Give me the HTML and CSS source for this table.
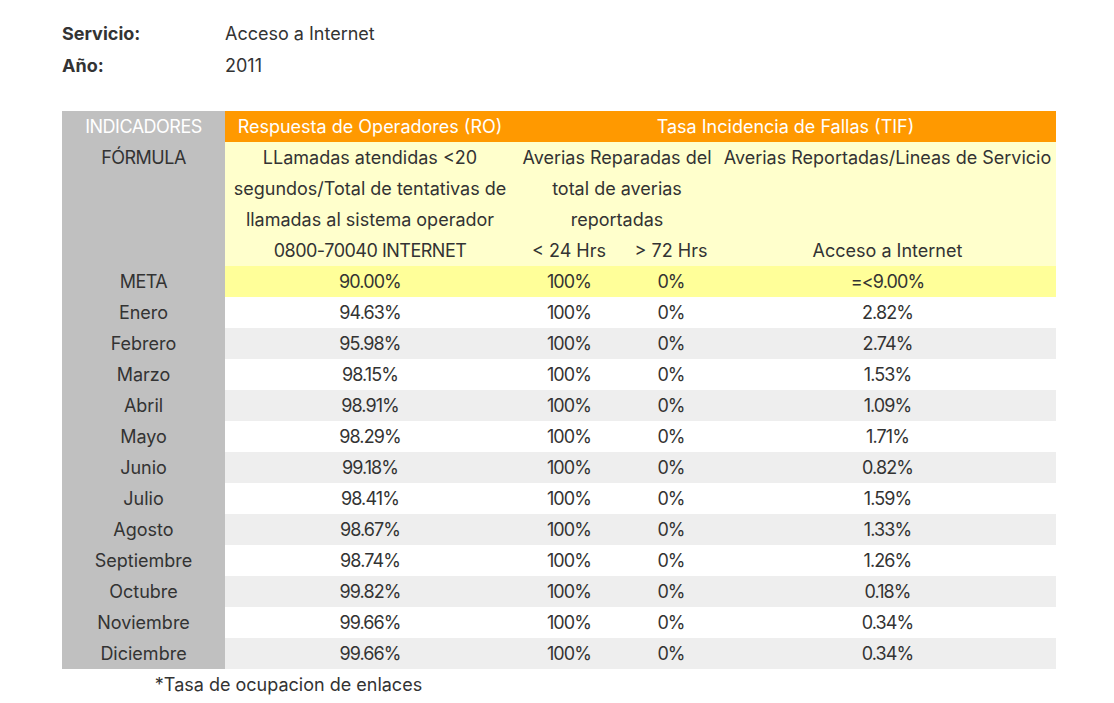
FILE: index.html
```html
<!DOCTYPE html>
<html lang="es">
<head>
<meta charset="utf-8">
<title>Indicadores - Acceso a Internet 2011</title>
<link rel="stylesheet" href="styles.css">
</head>
<body>
<div class="page">
  <table class="info">
    <tr><th class="info-label">Servicio:</th><td class="info-value">Acceso a Internet</td></tr>
    <tr><th class="info-label">Año:</th><td class="info-value">2011</td></tr>
  </table>

  <table class="ind">
    <colgroup>
      <col class="c-ind"><col class="c-ro"><col class="c-24"><col class="c-72"><col class="c-acc">
    </colgroup>
    <tr class="hdr">
      <td class="first first-hdr caps">INDICADORES</td>
      <td>Respuesta de Operadores (RO)</td>
      <td colspan="3">Tasa Incidencia de Fallas (TIF)</td>
    </tr>
    <tr class="formula">
      <td class="first top caps" rowspan="2">FÓRMULA</td>
      <td rowspan="2">LLamadas atendidas &lt;20 segundos/Total de tentativas de llamadas al sistema operador <span class="caps">0800-70040 INTERNET</span></td>
      <td colspan="2" class="top">Averias Reparadas del total de averias reportadas</td>
      <td class="top nowrap">Averias Reportadas/Lineas de Servicio</td>
    </tr>
    <tr class="formula">
      <td>&lt; 24 Hrs</td>
      <td>&gt; 72 Hrs</td>
      <td>Acceso a Internet</td>
    </tr>
    <tr class="meta data">
      <td class="first caps">META</td><td>90.00%</td><td>100%</td><td>0%</td><td>=&lt;9.00%</td>
    </tr>
    <tr class="odd data"><td class="first">Enero</td><td>94.63%</td><td>100%</td><td>0%</td><td>2.82%</td></tr>
    <tr class="even data"><td class="first">Febrero</td><td>95.98%</td><td>100%</td><td>0%</td><td>2.74%</td></tr>
    <tr class="odd data"><td class="first">Marzo</td><td>98.15%</td><td>100%</td><td>0%</td><td>1.53%</td></tr>
    <tr class="even data"><td class="first">Abril</td><td>98.91%</td><td>100%</td><td>0%</td><td>1.09%</td></tr>
    <tr class="odd data"><td class="first">Mayo</td><td>98.29%</td><td>100%</td><td>0%</td><td>1.71%</td></tr>
    <tr class="even data"><td class="first">Junio</td><td>99.18%</td><td>100%</td><td>0%</td><td>0.82%</td></tr>
    <tr class="odd data"><td class="first">Julio</td><td>98.41%</td><td>100%</td><td>0%</td><td>1.59%</td></tr>
    <tr class="even data"><td class="first">Agosto</td><td>98.67%</td><td>100%</td><td>0%</td><td>1.33%</td></tr>
    <tr class="odd data"><td class="first">Septiembre</td><td>98.74%</td><td>100%</td><td>0%</td><td>1.26%</td></tr>
    <tr class="even data"><td class="first">Octubre</td><td>99.82%</td><td>100%</td><td>0%</td><td>0.18%</td></tr>
    <tr class="odd data"><td class="first">Noviembre</td><td>99.66%</td><td>100%</td><td>0%</td><td>0.34%</td></tr>
    <tr class="even data"><td class="first">Diciembre</td><td>99.66%</td><td>100%</td><td>0%</td><td>0.34%</td></tr>
    <tr class="foot">
      <td colspan="2">*Tasa de ocupacion de enlaces</td><td></td><td></td><td></td>
    </tr>
  </table>
</div>
</body>
</html>
```
FILE: styles.css
```css
html, body {
  margin: 0;
  padding: 0;
  background: #ffffff;
}
body {
  font-family: "Inter", "Noto Sans", sans-serif;
  font-size: 18px;
  color: #333333;
}
.page {
  padding: 18px 0 0 62px;
}
.info {
  border-collapse: collapse;
  border-spacing: 0;
  margin-bottom: 29px;
}
.info th, .info td {
  padding: 0;
  line-height: 32px;
  text-align: left;
  vertical-align: middle;
}
.info-label {
  width: 163px;
  font-weight: bold;
}
.info-value {
  font-weight: normal;
}
.ind {
  border-collapse: collapse;
  border-spacing: 0;
  table-layout: fixed;
  width: 994px;
}
.c-ind { width: 163px; }
.c-ro { width: 290px; }
.c-24 { width: 108px; }
.c-72 { width: 96px; }
.c-acc { width: 337px; }
.ind td {
  padding: 0;
  line-height: 31px;
  text-align: center;
  vertical-align: middle;
}
.ind td.top { vertical-align: top; }
.ind td.nowrap { white-space: nowrap; }
.ind .caps { letter-spacing: -0.5px; }
.ind .data td { letter-spacing: -0.9px; }
.ind .data td.first { letter-spacing: 0; }
.ind .data td.first.caps { letter-spacing: -0.5px; }
.hdr td {
  background: #ff9900;
  color: #ffffff;
}
.ind td.first {
  background: #c0c0c0;
  color: #333333;
}
.ind td.first-hdr {
  color: #ffffff;
}
.formula td { background: #ffffcc; }
.meta td { background: #ffff99; }
.odd td { background: #ffffff; }
.even td { background: #eeeeee; }
.foot td { background: #ffffff; }
```
